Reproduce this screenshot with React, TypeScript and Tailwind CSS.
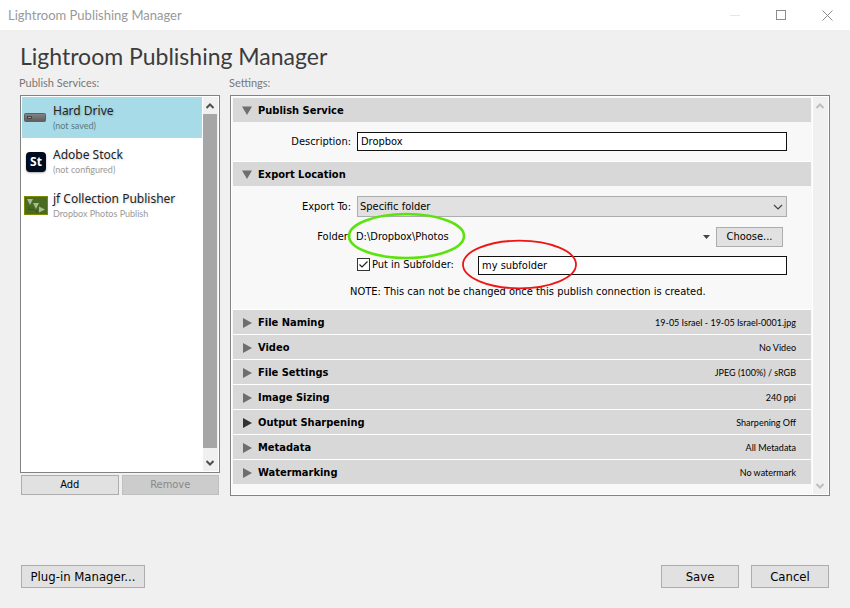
import React, { useState } from "react";

type Summary = { title: string; value: string; active?: boolean };

const summaries: Summary[] = [
  { title: "File Naming", value: "19-05 Israel - 19-05 Israel-0001.jpg" },
  { title: "Video", value: "No Video" },
  { title: "File Settings", value: "JPEG (100%) / sRGB" },
  { title: "Image Sizing", value: "240 ppi" },
  { title: "Output Sharpening", value: "Sharpening Off", active: true },
  { title: "Metadata", value: "All Metadata" },
  { title: "Watermarking", value: "No watermark" },
];

const uiFont = "font-['DejaVu_Sans_Condensed','DejaVu_Sans',sans-serif]";
const displayFont = "font-['Lato',sans-serif]";

function ScrollChevron({ up, dim, label }: { up?: boolean; dim?: boolean; label: string }) {
  return (
    <button type="button" aria-label={label} className="flex h-[17px] w-full items-center justify-center">
      <svg width="8" height="6" viewBox="0 0 8 6" fill="none" stroke={dim ? "#bfbfbf" : "#505050"} strokeWidth="2">
        <path d={up ? "M0.500 5 4 1.500 7.500 5" : "M0.500 1 4 4.500 7.500 1"} />
      </svg>
    </button>
  );
}

function SectionHeader({ title, value, open, active }: { title: string; value?: string; open?: boolean; active?: boolean }) {
  return (
    <button type="button" aria-expanded={!!open} className="flex h-6 w-full items-center bg-[#d8d8d8] pt-px pr-[15px] pl-[9px] text-left">
      <svg width="11" height="10" viewBox="0 0 11 10" fill={active ? "#333" : "#6e6e6e"} className="shrink-0">
        <path d={open ? "M0 0.500H10L5 9Z" : "M1 0 10 5 1 10Z"} />
      </svg>
      <span className={`ml-[5px] flex-1 pt-px text-[11px] leading-4 font-bold ${uiFont}`}>{title}</span>
      {value && <span className={`text-[9px] ${displayFont}`}>{value}</span>}
    </button>
  );
}

function DriveIcon() {
  return (
    <svg width="24" height="24" viewBox="0 0 24 24">
      <defs>
        <linearGradient id="drive" x1="0" y1="0" x2="0" y2="1">
          <stop offset="0" stopColor="#858585" />
          <stop offset="1" stopColor="#5c5c5c" />
        </linearGradient>
      </defs>
      <rect x="2.500" y="7.500" width="21" height="8" rx="1" fill="url(#drive)" stroke="#606060" />
      <rect x="5.500" y="10.500" width="4" height="2" fill="#999" stroke="#3a3a3a" strokeWidth="0.8" />
    </svg>
  );
}

function StockIcon() {
  return (
    <span className="ml-1 flex size-5 items-center justify-center rounded-[4px] bg-[#000b1d] font-['Open_Sans',sans-serif] text-[12px] font-bold text-white shadow-[0_1px_2px_#0005]">
      St
    </span>
  );
}

function PublisherIcon() {
  return (
    <svg width="26" height="20" viewBox="0 0 26 20">
      <rect x="2.500" y="0.500" width="23" height="18" fill="#4a6a22" stroke="#7c8c00" />
      <g fill="#a9bb92">
        <path d="M5 3H11L8 9Z" />
        <path d="M11 7H17L14 13Z" />
        <path d="M17 10.500 23 13.500 17 16.500Z" />
      </g>
      <path d="M7 11V13.500H12M14 14V16H16" stroke="#35501a" fill="none" />
    </svg>
  );
}

const services = [
  { name: "Hard Drive", status: "(not saved)", icon: <DriveIcon />, selected: true },
  { name: "Adobe Stock", status: "(not configured)", icon: <StockIcon /> },
  { name: "jf Collection Publisher", status: "Dropbox Photos Publish", icon: <PublisherIcon /> },
];

function Services() {
  return (
    <section className="flex w-[200px] shrink-0 flex-col pb-px">
      <h2 className={`-ml-px text-[11px] leading-4 text-[#777] ${displayFont}`}>Publish Services:</h2>
      <div className="mt-1 flex flex-1 gap-px border border-[#828282] bg-white p-px">
        <ul className="flex flex-1 flex-col gap-[3px]">
          {services.map((s) => (
            <li key={s.name} className={s.selected ? "bg-[#a7dbe7]" : ""}>
              <button type="button" className="flex h-[41px] w-full items-center text-left">
                <span className="flex w-[31px] shrink-0 items-center">{s.icon}</span>
                <span className="whitespace-nowrap">
                  <span className="block font-['Noto_Sans',sans-serif] text-[12px] leading-4 text-[#222] [text-shadow:1px_1px_2px_#0003]">{s.name}</span>
                  <span className={`block text-[9px] leading-[14px] ${displayFont} ${s.selected ? "text-[#5c7880]" : "text-[#999]"}`}>{s.status}</span>
                </span>
              </button>
            </li>
          ))}
        </ul>
        <div className="flex w-[15px] flex-col bg-[#f0f0f0] pr-px">
          <ScrollChevron up label="Scroll services up" />
          <div className="mb-1.5 flex-1 bg-[#a6a6a6]" />
          <ScrollChevron label="Scroll services down" />
        </div>
      </div>
      <div className="mt-0.5 flex gap-[3px] px-px text-[11px]">
        <button type="button" className="h-5 flex-1 border border-[#adadad] bg-[#e1e1e1]">Add</button>
        <button type="button" disabled className="h-5 flex-1 border border-[#bfbfbf] bg-[#ccc] text-[#888]">Remove</button>
      </div>
    </section>
  );
}

function Settings() {
  const [description, setDescription] = useState("Dropbox");
  const [subfolder, setSubfolder] = useState("my subfolder");
  const [nested, setNested] = useState(true);
  const label = "w-[118px] shrink-0 pt-px text-right";
  const field = "h-[19px] min-w-0 flex-1 border border-[#111] bg-white px-[3px] outline-none";
  return (
    <section className="flex min-w-0 flex-1 flex-col">
      <h2 className={`-ml-px text-[11px] leading-4 text-[#777] ${displayFont}`}>Settings:</h2>
      <div className="relative mt-1 flex flex-1 gap-px border border-[#828282] bg-white p-px text-[11px]">
        <div className="min-w-0 flex-1 bg-[#f8f8f8] pt-px pr-px pb-2.5 pl-px">
          <SectionHeader title="Publish Service" open />
          <div className="flex items-center gap-1.5 border-b border-white py-2.5 pr-6">
            <label htmlFor="description" className={label}>Description:</label>
            <input id="description" className={field} value={description} onChange={(e) => setDescription(e.target.value)} />
          </div>
          <SectionHeader title="Export Location" open />
          <div className="border-b border-white pt-2.5 pr-6 pb-[9px]">
            <div className="flex items-center gap-1.5">
              <label htmlFor="export-to" className={label}>Export To:</label>
              <span className="relative flex min-w-0 flex-1">
                <select id="export-to" className="h-[21px] w-full appearance-none border border-[#adadad] bg-[#e1e1e1] px-[2px] pt-px">
                  <option>Specific folder</option>
                </select>
                <svg width="10" height="6" viewBox="0 0 10 6" fill="none" stroke="#444" strokeWidth="1.2" className="pointer-events-none absolute top-[8px] right-[4px]">
                  <path d="M1 1 5 5 9 1" />
                </svg>
              </span>
            </div>
            <div className="mt-2.5 flex items-center pr-1">
              <span className={label}>Folder:</span>
              <span className="ml-[5px] flex-1 pt-px">D:\Dropbox\Photos</span>
              <button type="button" aria-label="Recent folders" className="mr-1.5">
                <svg width="7" height="4" viewBox="0 0 7 4" fill="#444"><path d="M0 0H7L3.500 4Z" /></svg>
              </button>
              <button type="button" className="h-5 w-[67px] border border-[#adadad] bg-[#e1e1e1] pt-px">Choose...</button>
            </div>
            <div className="mt-[9px] flex items-center pl-[124px]">
              <label className="flex w-[121px] shrink-0 items-center gap-0.5 pb-0.5 leading-4 whitespace-nowrap">
                <span className="relative flex">
                  <input type="checkbox" checked={nested} onChange={(e) => setNested(e.target.checked)} className="peer size-[13px] appearance-none border border-[#333] bg-white" />
                  <svg width="13" height="13" viewBox="0 0 13 13" fill="none" stroke="#222" strokeWidth="1.2" className="pointer-events-none absolute inset-0 opacity-0 peer-checked:opacity-100">
                    <path d="M2.500 6.500 5 9 10.500 3.500" />
                  </svg>
                </span>
                Put in Subfolder:
              </label>
              <input aria-label="Subfolder name" className={field} value={subfolder} onChange={(e) => setSubfolder(e.target.value)} />
            </div>
            <p className="mt-[9px] pl-[117px] leading-4">NOTE: This can not be changed once this publish connection is created.</p>
          </div>
          <div className="flex flex-col gap-px bg-white">
            {summaries.map((s) => (
              <SectionHeader key={s.title} {...s} />
            ))}
          </div>
        </div>
        <div className="flex w-[15px] flex-col justify-between bg-[#f0f0f0] pr-px">
          <ScrollChevron up dim label="Scroll settings up" />
          <ScrollChevron dim label="Scroll settings down" />
        </div>
        <svg width="232" height="80" viewBox="0 0 232 80" fill="none" className="pointer-events-none absolute top-[114px] left-[116px]">
          <ellipse cx="59.500" cy="26" rx="57.500" ry="22" stroke="#5be30c" strokeWidth="2.600" />
          <ellipse cx="172.500" cy="54.500" rx="56.500" ry="23.800" stroke="#f01414" strokeWidth="1.800" />
        </svg>
      </div>
    </section>
  );
}

export default function App() {
  const footerButton = "h-[23px] border border-[#adadad] bg-[#e1e1e1]";
  return (
    <div className={`flex min-h-screen flex-col bg-[#f0f0f0] text-black ${uiFont}`}>
      <header className="flex h-[30px] items-center bg-white pr-[17px] pl-2 text-[#999]">
        <span className={`flex-1 pt-px text-[13px] ${displayFont}`}>Lightroom Publishing Manager</span>
        <div className="flex gap-[35px]">
          <button type="button" aria-label="Minimize">
            <svg width="11" height="11" stroke="#e6e6e6"><path d="M0 5.500H10" /></svg>
          </button>
          <button type="button" aria-label="Maximize">
            <svg width="11" height="11" fill="none" stroke="#8c8c8c"><rect x="0.500" y="0.500" width="9" height="9" /></svg>
          </button>
          <button type="button" aria-label="Close">
            <svg width="11" height="11" stroke="#8c8c8c"><path d="M0.500 0.500 10.500 10.500M10.500 0.500 0.500 10.500" /></svg>
          </button>
        </div>
      </header>
      <main className="flex flex-1 flex-col px-5 pt-2.5 pb-5">
        <h1 className={`text-[23px] leading-8 text-[#3c3c3c] ${displayFont}`}>Lightroom Publishing Manager</h1>
        <div className="mt-[3px] flex gap-2.5">
          <Services />
          <Settings />
        </div>
        <footer className="mt-auto flex gap-3 px-px pt-4 text-[13px]">
          <button type="button" className={`${footerButton} mr-auto w-[124px]`}>Plug-in Manager...</button>
          <button type="button" className={`${footerButton} w-[78px]`}>Save</button>
          <button type="button" className={`${footerButton} w-[78px]`}>Cancel</button>
        </footer>
      </main>
    </div>
  );
}
